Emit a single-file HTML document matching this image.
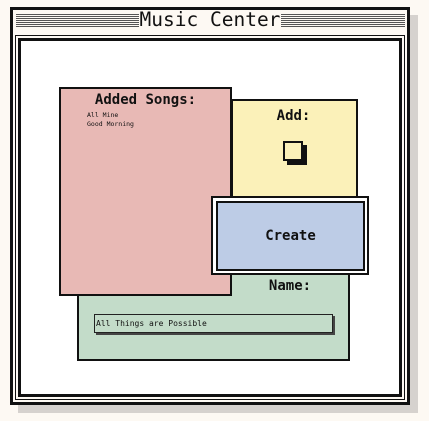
<!DOCTYPE html>
<html><head><style>
*{margin:0;padding:0;box-sizing:border-box}
body{width:429px;height:421px;background:#fdf9f3;position:relative;overflow:hidden;font-family:"DejaVu Sans Mono","Liberation Mono",monospace;color:#111}
.a{position:absolute;white-space:nowrap}
.stripes{background:repeating-linear-gradient(#555 0 1px,#fdf9f3 1px 2px)}
</style></head><body>
<div class="a" style="left:18px;top:15px;width:400px;height:398px;background:#d6d2ce"></div>
<div class="a" style="left:10px;top:7px;width:400px;height:398px;background:#fdf9f3;border:3px solid #111"></div>
<div class="a stripes" style="left:16px;top:14px;width:123px;height:14px"></div>
<div class="a stripes" style="left:281px;top:14px;width:124px;height:14px"></div>
<div class="a" style="left:136px;top:8px;width:148px;text-align:center;font-size:19.5px;line-height:24px">Music Center</div>
<div class="a" style="left:15px;top:35px;width:390px;height:365px;border:1px solid #111"></div>
<div class="a" style="left:18px;top:38px;width:384px;height:359px;background:#fff;border:3px solid #111"></div>
<div class="a" style="left:231px;top:99px;width:127px;height:102px;background:#fbf1b9;border:2px solid #111"></div>
<div class="a" style="left:231px;top:108px;width:125px;text-align:center;font-size:14px;font-weight:bold">Add:</div>
<div class="a" style="left:287px;top:145px;width:20px;height:20px;background:#111"></div>
<div class="a" style="left:283px;top:141px;width:20px;height:20px;background:#fbf1b9;border:2px solid #111"></div>
<div class="a" style="left:77px;top:268px;width:273px;height:93px;background:#c3dcc9;border:2px solid #111"></div>
<div class="a" style="left:231px;top:278px;width:118px;text-align:center;font-size:14px;font-weight:bold">Name:</div>
<div class="a" style="left:96px;top:316px;width:239px;height:19px;background:#444"></div>
<div class="a" style="left:94px;top:314px;width:239px;height:19px;background:#c3dcc9;border:1px solid #222;font-size:8px;line-height:17px;padding-left:1px">All Things are Possible</div>
<div class="a" style="left:59px;top:87px;width:173px;height:209px;background:#e8b9b5;border:2px solid #111"></div>
<div class="a" style="left:59px;top:92px;width:173px;text-align:center;font-size:14px;font-weight:bold">Added Songs:</div>
<div class="a" style="left:87px;top:111px;font-size:6.5px;line-height:9px">All Mine<br>Good Morning</div>
<div class="a" style="left:211px;top:196px;width:158px;height:79px;background:#fff;border:2px solid #111"></div>
<div class="a" style="left:216px;top:201px;width:149px;height:70px;background:#bdcce6;border:2px solid #111;text-align:center;font-size:14px;font-weight:bold;line-height:66px">Create</div>
</body></html>
